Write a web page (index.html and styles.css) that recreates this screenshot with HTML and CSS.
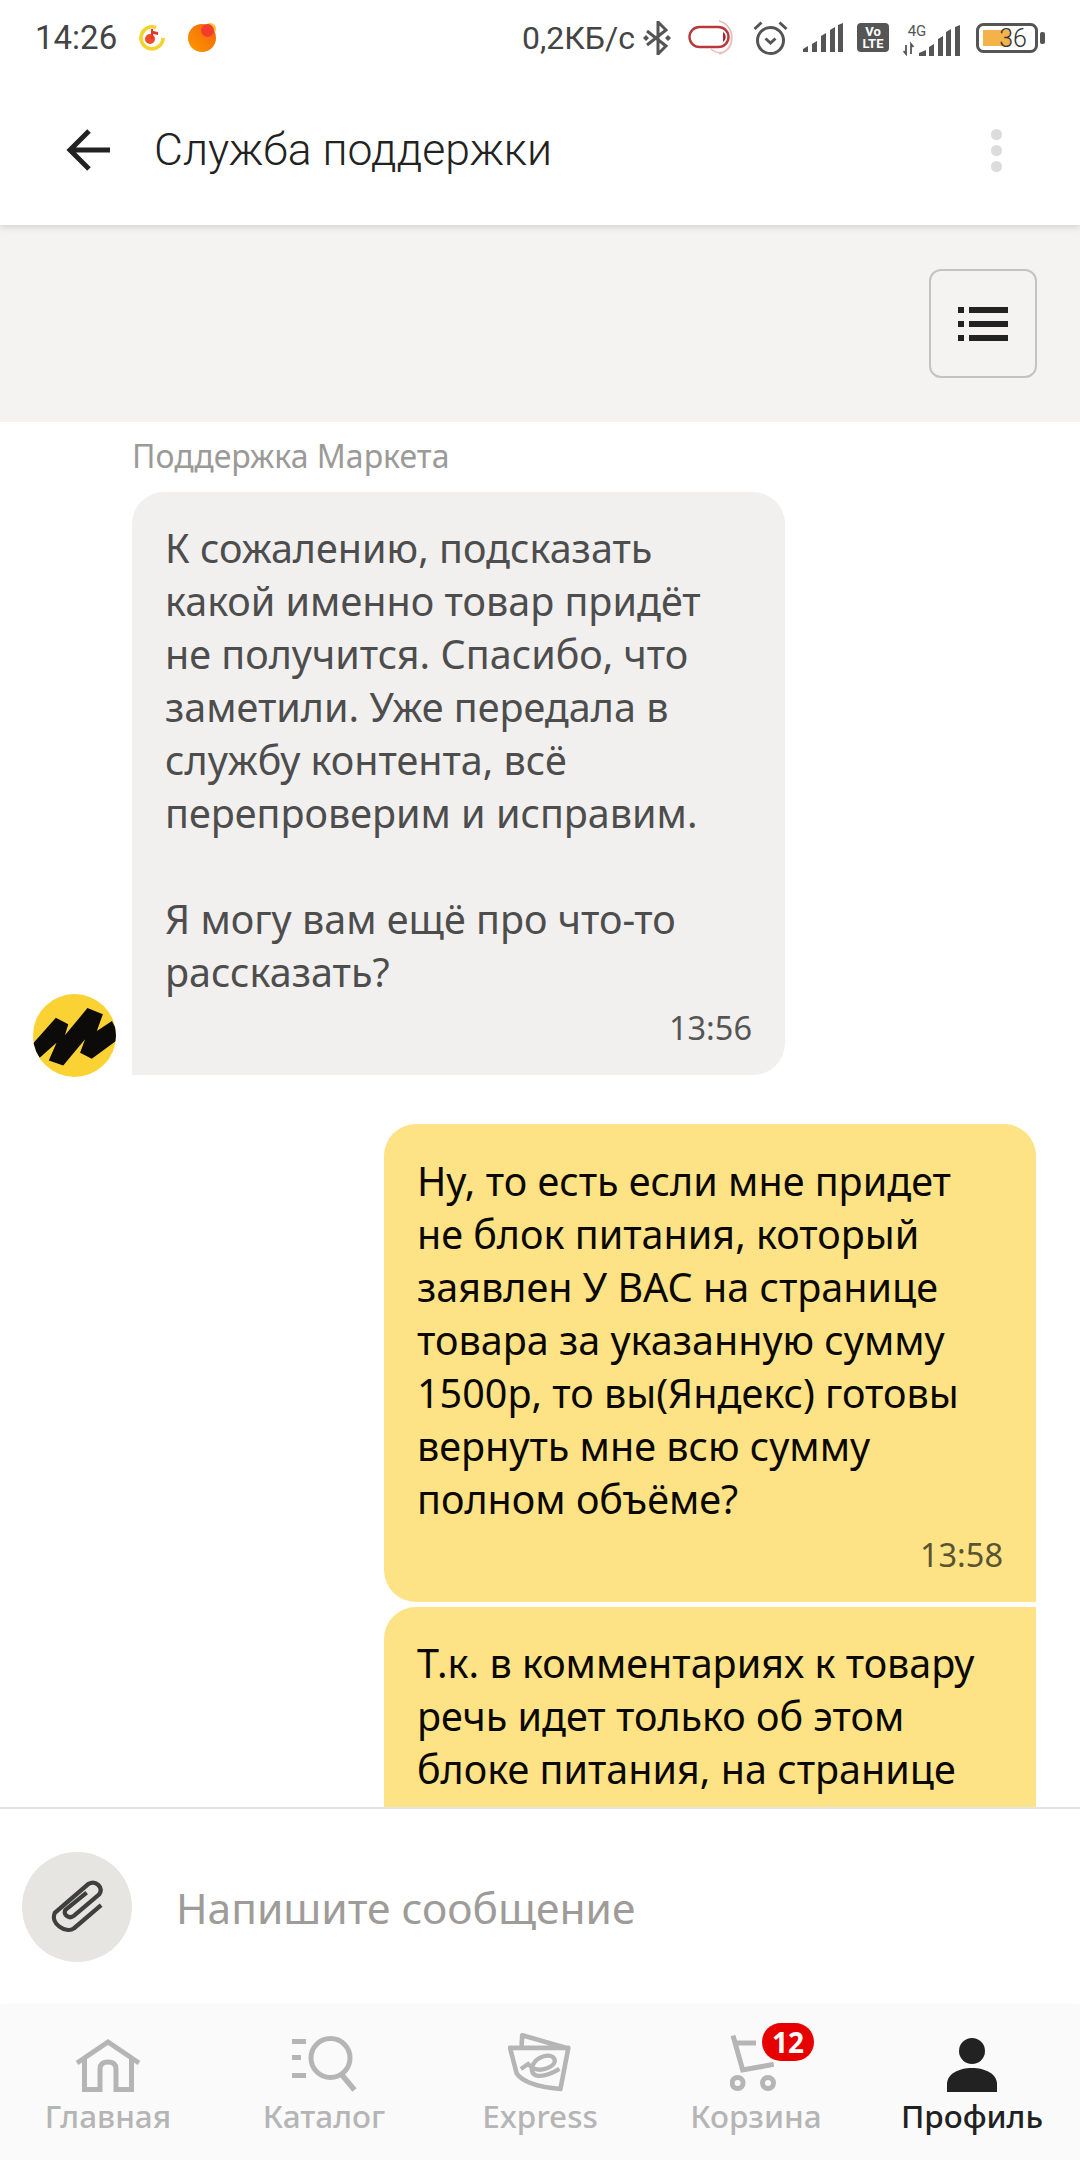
FILE: index.html
```html
<!DOCTYPE html>
<html lang="ru">
<head>
<meta charset="utf-8">
<title>Служба поддержки</title>
<link rel="stylesheet" href="styles.css">
</head>
<body>
<div class="app">
  <header class="top">
    <div class="status">
      <span class="clock">14:26</span>
      <svg class="ic-music" width="26" height="28" viewBox="0 0 26 28"><path d="M17 3.600A11 11 0 1 0 24 14" fill="none" stroke="#f5d22e" stroke-width="3.600"/><circle cx="11" cy="15" r="5" fill="#ef4a2a"/><path d="M12 15V5h2v2l5 1v3l-5-1v5z" fill="#e5352b"/></svg>
      <svg class="ic-orange" width="28" height="29" viewBox="0 0 28 29"><defs><linearGradient id="og" x1="0" y1="1" x2="1" y2="0"><stop offset="0" stop-color="#ff9a00"/><stop offset="1" stop-color="#f0620a"/></linearGradient></defs><circle cx="22" cy="6" r="6" fill="#f7c531"/><circle cx="14" cy="15" r="14" fill="url(#og)"/><circle cx="19.500" cy="7.500" r="6.500" fill="#f23c2c"/></svg>
      <span class="speed">0,2КБ/с</span>
      <svg class="ic-bt" width="28" height="34" viewBox="0 0 28 34"><path d="M4 10l19 15-8 8V1l8 8L4 24" fill="none" stroke="#555" stroke-width="3"/><path d="M0 17l3-3 3 3-3 3zM22 17l3-3 3 3-3 3z" fill="#555"/></svg>
      <svg class="ic-pill" width="48" height="36" viewBox="0 0 48 36"><path d="M31 1a17 17 0 0 1 0 33" fill="none" stroke="#eeb8b8" stroke-width="1.600"/><path d="M23 29a12 12 0 0 0 20-12" fill="none" stroke="#f0c0c0" stroke-width="1.600"/><rect x="1.500" y="7" width="39" height="20" rx="10" fill="#fff" stroke="#b8383c" stroke-width="2.400"/><path d="M35 12a6 6 0 0 1 0 10z" fill="#9c2a2e"/></svg>
      <svg class="ic-alarm" width="35" height="34" viewBox="0 0 35 34"><circle cx="17.500" cy="19.500" r="13" fill="none" stroke="#555" stroke-width="3"/><path d="M1.500 8l7-6.500M33.500 8l-7-6.500" stroke="#555" stroke-width="3" fill="none"/><path d="M12.500 17.500l5 4.500 5-4.500" stroke="#555" stroke-width="3" fill="none"/></svg>
      <svg class="ic-signal" width="40" height="29" viewBox="0 0 40 29"><path d="M0 29v-3l5-3v6zM9 29v-8l5-3v11zM18 29V13l5-3v19zM27 29V7l5-3v25zM35 29V2l5-2v29z" fill="#555"/></svg>
      <svg class="ic-volte" width="32" height="29" viewBox="0 0 32 29"><rect width="32" height="29" rx="4" fill="#555"/><text x="16" y="13" class="volte-t">Vo</text><text x="16" y="25" class="volte-t">LTE</text></svg>
      <svg class="ic-4g" width="57" height="36" viewBox="0 -5 57 36"><text x="14" y="11" class="net-t">4G</text><path d="M3 20v9l-2.500-3M8 29v-10l2.500 3" fill="none" stroke="#555" stroke-width="1.800"/><path d="M16 31v-3l7-3v6zM26 31v-9l5-3v12zM35 31V14l5-3v20zM43 31V7l5-3v27zM52 31V2l5-2v31z" fill="#555"/></svg>
      <svg class="ic-batt" width="69" height="30" viewBox="0 0 69 30"><rect x="1.500" y="1.500" width="59" height="27" rx="6" fill="#fff" stroke="#555" stroke-width="3"/><rect x="7" y="7" width="27" height="16" fill="#f4b24a"/><rect x="64" y="9" width="5" height="12" rx="2" fill="#555"/><text x="37" y="24" class="batt-t">36</text></svg>
    </div>
    <div class="bar">
      <svg class="ic-back" width="44" height="44" viewBox="0 0 44 44"><path d="M44 22H4M23 3L4 22l19 19" fill="none" stroke="#222" stroke-width="5"/></svg>
      <h1 class="title">Служба поддержки</h1>
      <div class="dots"><i></i><i></i><i></i></div>
    </div>
  </header>

  <div class="tools">
    <button class="listbtn">
      <svg width="50" height="34" viewBox="0 0 50 34"><path d="M0 0h6v6H0zM0 14h6v6H0zM0 28h6v6H0zM11 0h39v6H11zM11 14h39v6H11zM11 28h39v6H11z" fill="#222"/></svg>
    </button>
  </div>

  <main class="chat">
    <section class="inrow">
      <svg class="avatar" width="83" height="83" viewBox="100 105 247 247"><defs><clipPath id="av"><circle cx="223.500" cy="228.500" r="123.500"/></clipPath></defs><circle cx="223.500" cy="228.500" r="123.500" fill="#fbd233"/><path clip-path="url(#av)" d="M95 258L168 176L205 195L195 228L262 147L308 165L290 215L335 185L360 235L275 298L240 280L255 240L190 318L147 303L170 250L120 295Z" fill="#0c0b0a"/></svg>
      <div class="incol">
        <div class="sender">Поддержка Маркета</div>
        <div class="bubble in">
          <p class="msg">К сожалению, подсказать<br>какой именно товар придёт<br>не получится. Спасибо, что<br>заметили. Уже передала в<br>службу контента, всё<br>перепроверим и исправим.<br><br>Я могу вам ещё про что-то<br>рассказать?</p>
          <div class="time">13:56</div>
        </div>
      </div>
    </section>
    <section class="outcol">
      <div class="bubble out">
        <p class="msg">Ну, то есть если мне придет<br>не блок питания, который<br>заявлен У ВАС на странице<br>товара за указанную сумму<br>1500р, то вы(Яндекс) готовы<br>вернуть мне всю сумму<br>полном объёме?</p>
        <div class="time">13:58</div>
      </div>
      <div class="bubble out second">
        <p class="msg">Т.к. в комментариях к товару<br>речь идет только об этом<br>блоке питания, на странице</p>
      </div>
    </section>
  </main>

  <div class="composer">
    <div class="attach">
      <svg width="54" height="54" viewBox="-1 -1 56 56"><path d="M52 25L24 49C15 55-1 44 4 33L39 3C46-1 55 6 50 14L24 36C19 40 12 35 15 30L37 12" fill="none" stroke="#3f3f3f" stroke-width="4.400"/></svg>
    </div>
    <div class="placeholder">Напишите сообщение</div>
  </div>

  <nav class="nav">
    <div class="tab">
      <div class="tab-icon"><svg width="64" height="54" viewBox="0 0 64 54"><path d="M1 25L32 4l31 21M8.500 19v32.500H24V31q0-7 8-7t8 7v20.500h15.500V19" fill="none" stroke="#b5b5b5" stroke-width="5"/></svg></div>
      <span class="tab-label">Главная</span>
    </div>
    <div class="tab">
      <div class="tab-icon"><svg width="65" height="56" viewBox="0 0 65 56"><path d="M0 3h14v5H0zM0 19h9v5H0zM0 37h14v5H0z" fill="#b5b5b5"/><circle cx="38.500" cy="22" r="19.500" fill="none" stroke="#b5b5b5" stroke-width="5"/><path d="M50 39l12.500 15" stroke="#b5b5b5" stroke-width="5.500" fill="none"/></svg></div>
      <span class="tab-label">Каталог</span>
    </div>
    <div class="tab">
      <div class="tab-icon"><svg width="64" height="60" viewBox="80 0 192 182"><path d="M120 45l2-35 140 40M85 48h177l-24 125q-108-10-133-48z" fill="none" stroke="#b5b5b5" stroke-width="14" stroke-linejoin="round"/><path d="M118 112l22-15 10 10c25 18 78-2 70-25-10-20-55-10-68 23-7 32 28 40 83 7" fill="none" stroke="#b5b5b5" stroke-width="13"/></svg></div>
      <span class="tab-label">Express</span>
    </div>
    <div class="tab">
      <div class="tab-icon cart"><svg width="46" height="57" viewBox="0 0 46 57"><path d="M3 .5L12.700 35l31-5.700M5 8h21" fill="none" stroke="#b5b5b5" stroke-width="5"/><circle cx="7.600" cy="48" r="5.500" fill="none" stroke="#b5b5b5" stroke-width="5"/><circle cx="38" cy="48" r="5.500" fill="none" stroke="#b5b5b5" stroke-width="5"/></svg><span class="badge">12</span></div>
      <span class="tab-label">Корзина</span>
    </div>
    <div class="tab active">
      <div class="tab-icon"><svg width="50" height="54" viewBox="0 0 50 54"><circle cx="25" cy="13" r="13" fill="#222"/><path d="M0 54v-8c0-10 12-16 25-16s25 6 25 16v8z" fill="#222"/></svg></div>
      <span class="tab-label">Профиль</span>
    </div>
  </nav>
</div>
</body>
</html>
```

FILE: styles.css
```css
* { box-sizing: border-box; }
html, body { margin: 0; padding: 0; }
body { background: #fff; font-family: "Noto Sans", sans-serif; }
.app { width: 1080px; height: 2160px; display: flex; flex-direction: column; overflow: hidden; background: #fff; }

.top { height: 225px; flex: none; background: #fff; position: relative; z-index: 2; box-shadow: 0 2px 7px rgba(0,0,0,.14); }
.status { height: 75px; display: flex; align-items: center; padding-left: 35px; color: #444; font-family: Roboto, sans-serif; }
.status svg { flex: none; }
.clock { font-size: 33px; width: 83px; }
.ic-music { margin-left: 21px; }
.ic-orange { margin-left: 23px; }
.speed { font-size: 32px; margin-left: 306px; width: 121px; }
.ic-pill { margin-left: 17px; }
.ic-alarm { margin-left: 17px; }
.ic-signal { margin-left: 15px; }
.ic-volte { margin-left: 14px; }
.ic-4g { margin-left: 14px; }
.ic-batt { margin-left: 16px; }
.volte-t { font: 700 13px Roboto, sans-serif; fill: #fff; text-anchor: middle; }
.net-t { font: 400 15px Roboto, sans-serif; fill: #555; text-anchor: middle; }
.batt-t { font: 300 25px Roboto, sans-serif; fill: #333; text-anchor: middle; }

.bar { height: 150px; display: flex; align-items: center; padding: 0 78px 0 66px; }
.title { margin: 0 0 0 44px; flex: 1; font: 300 44.500px Roboto, sans-serif; color: #222; }
.dots { display: flex; flex-direction: column; gap: 5px; }
.dots i { display: block; width: 11px; height: 11px; border-radius: 50%; background: #dcdcdc; }

.tools { height: 197px; flex: none; background: #f4f3f2; display: flex; justify-content: flex-end; padding: 44px 43px 0 0; }
.listbtn { width: 108px; height: 109px; background: transparent; border: 2px solid #c4c3c1; border-radius: 12px; padding: 0; display: flex; align-items: center; justify-content: center; }

.chat { flex: 1; min-height: 0; overflow: hidden; display: flex; flex-direction: column; }
.inrow { display: flex; align-items: flex-end; gap: 16px; padding-left: 33px; margin-bottom: 49px; }
.avatar { flex: none; margin-bottom: -2px; }
.incol { width: 653px; }
.sender { height: 70px; padding: 12px 0 0; font-size: 32px; line-height: 44px; color: #9b9a98; }
.bubble { padding: 30px 33px 0; border-radius: 32px; }
.msg { margin: 0; font-size: 39.500px; line-height: 53px; white-space: nowrap; }
.time { text-align: right; font-size: 32.500px; line-height: 40px; margin-top: 9px; }
.in { height: 583px; background: #f1f0ef; color: #4d4d4d; border-bottom-left-radius: 0; }
.in .time { color: #555; }
.outcol { display: flex; flex-direction: column; align-items: flex-end; gap: 5px; padding-right: 44px; }
.out { width: 652px; background: #fde385; color: #0a0800; }
.out:first-child { height: 478px; border-bottom-right-radius: 0; padding-top: 31px; border-top-right-radius: 32px; }
.out .time { color: #5a5330; }
.second { height: 300px; border-top-right-radius: 0; }

.composer { height: 198px; flex: none; background: #fff; border-top: 2px solid #e4e3df; display: flex; align-items: center; padding: 0 0 0 22px; gap: 44px; }
.attach { width: 110px; height: 110px; border-radius: 50%; background: #e6e5e2; display: flex; align-items: center; justify-content: center; }
.placeholder { font-size: 42.500px; color: #9e9b98; }

.nav { height: 155px; flex: none; background: #fafafa; display: grid; grid-template-columns: repeat(5, 216px); box-shadow: 0 -1px 3px rgba(0,0,0,.03); }
.tab { display: flex; flex-direction: column; align-items: center; color: #b5b5b5; }
.tab-icon { height: 62px; margin-top: 25px; display: flex; align-items: flex-end; justify-content: center; position: relative; }
.tab-label { font-size: 31.500px; font-weight: 500; line-height: 42px; margin-top: 3px; }
.active { color: #212121; }
.cart svg { margin-right: 6px; }
.badge { position: absolute; left: 32px; top: -7px; width: 52px; height: 38px; border-radius: 19px; background: #e60000; color: #fff; font-size: 28px; font-weight: 700; line-height: 38px; text-align: center; }
```
